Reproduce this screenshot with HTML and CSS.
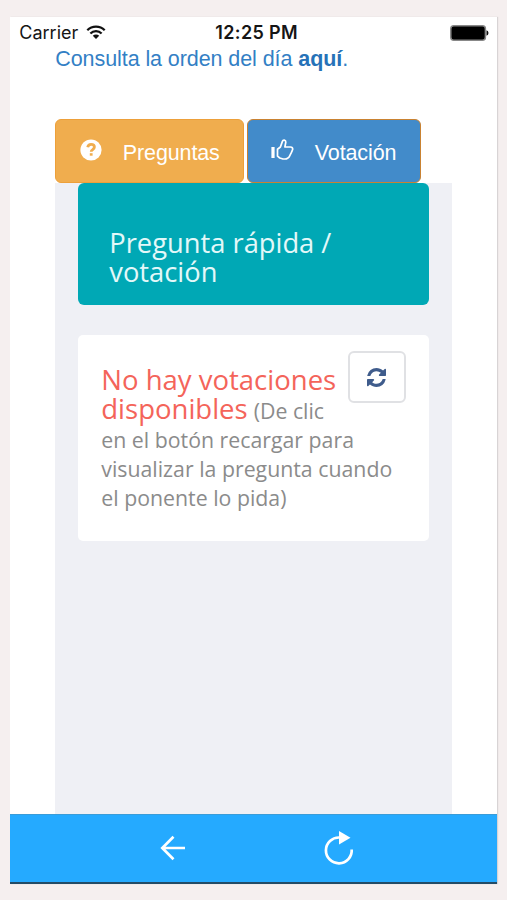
FILE: index.html
```html
<!DOCTYPE html>
<html lang="es">
<head>
<meta charset="utf-8">
<meta name="viewport" content="width=device-width">
<title>Votación</title>
<link rel="stylesheet" href="styles.css">
</head>
<body>
<div class="phone">
  <header class="status">
    <div class="carrier"><span>Carrier</span>
      <svg width="20" height="15" viewBox="0 0 20 15" fill="none" stroke="#111" stroke-width="2.3"><path d="M1.3 5.3a12.3 12.3 0 0 1 17.4 0M4.4 8.5a7.9 7.9 0 0 1 11.2 0"/><path d="M10 14 6.8 10.8a4.6 4.6 0 0 1 6.4 0z" fill="#111" stroke="none"/></svg>
    </div>
    <time class="clock">12:25 PM</time>
    <svg class="battery" width="39" height="16" viewBox="0 0 39 16"><rect x=".8" y=".8" width="34.6" height="14.4" rx="3" fill="#000" stroke="#888" stroke-width="1.5"/><path d="M36.5 5.3q2 .4 2 2.7t-2 2.7z" fill="#111"/></svg>
  </header>
  <main class="content">
    <a class="agenda" href="#">Consulta la orden del día <b>aquí</b>.</a>
    <nav class="tabs">
      <a class="tab tab-questions" href="#">
        <svg width="22" height="22" viewBox="0 0 22 22"><circle cx="11" cy="11" r="10.6" fill="#fff"/><path d="M7.7 8.2C8.2 5.8 9.5 5.3 11.1 5.3c2 0 3.3 1.1 3.3 2.8 0 2.6-3.2 2.3-3.2 4.7" fill="none" stroke="#f0ad4e" stroke-width="2.8"/><path d="M9.8 14.2h2.8v2.5H9.8z" fill="#f0ad4e"/></svg>
        <span>Preguntas</span>
      </a>
      <a class="tab tab-vote" href="#">
        <svg width="23" height="22" viewBox="0 0 23 22" fill="none" stroke="#fff" stroke-width="1.7" stroke-linejoin="round"><path d="M.4 8h3.2v11H.4z" fill="#fff" stroke="none"/><path d="M6.500 10.200 9.400 8l2-5.600q.5-1.400 1.900-1.200 1.600.3 1.500 2L13.900 8h5.600q2.300.1 2.200 2.200l-.7 2-.8 1.700-.9 1.800-1.100 2.100-1.700 1.500q-1 .7-2.500.7H12l-3.200-1-2.300-1.800z"/></svg>
        <span>Votación</span>
      </a>
    </nav>
    <section class="panel">
      <h1 class="title">Pregunta rápida /<br>votación</h1>
      <article class="card">
        <button class="reload" aria-label="Recargar">
          <svg width="19" height="19" viewBox="0 0 1536 1536" fill="#3f5c8c"><path d="M1511 928q0 5-1 7-64 268-268 434.500T764 1536q-146 0-282.500-55T238 1324l-129 129q-19 19-45 19t-45-19-19-45V960q0-26 19-45t45-19h448q26 0 45 19t19 45-19 45l-137 137q71 66 161 102t187 36q134 0 250-65t186-179q11-17 53-117 8-23 30-23h192q13 0 22.500 9.500t9.500 22.500zm25-800v448q0 26-19 45t-45 19h-448q-26 0-45-19t-19-45 19-45l138-138Q969 256 768 256q-134 0-250 65T332 500q-11 17-53 117-8 23-30 23H50q-13 0-22.500-9.500T18 608v-7q65-268 270-434.500T768 0q146 0 284 55.500T1297 212l130-129q19-19 45-19t45 19 19 45z"/></svg>
        </button>
        <div class="message">
          <div class="alert">No hay votaciones</div>
          <div class="mixed"><span class="alert">disponibles</span><span>(De clic</span></div>
          <div class="hint">en el botón recargar para<br>visualizar la pregunta cuando<br>el ponente lo pida)</div>
        </div>
      </article>
    </section>
  </main>
  <footer class="toolbar">
    <svg width="26" height="26" viewBox="0 0 26 26" fill="none" stroke="#fff" stroke-width="2.7"><path d="M25 13H2.500M13.500 1.800 2.300 13l11.200 11.200"/></svg>
    <svg width="30" height="34" viewBox="0 0 30 34" fill="none" stroke="#fff" stroke-width="2.700"><path d="M15.500 6.500A12.900 12.900 0 1 0 27.700 18.500"/><path d="M15 0v13.500L26.500 6.800z" fill="#fff" stroke="none"/></svg>
  </footer>
</div>
</body>
</html>
```
FILE: styles.css
```css
* { box-sizing: border-box; }
body {
  margin: 0;
  height: 900px;
  padding: 17px 10px 0 10.3px;
  background: #f5efef;
  font-family: "Liberation Sans", sans-serif;
  overflow: hidden;
}
a { text-decoration: none; }
svg { display: block; flex: none; }
.phone {
  display: flex;
  flex-direction: column;
  height: 866.5px;
  background: #fff;
  box-shadow: 1px 0 1px #d8d4d5;
}
.status {
  display: grid;
  grid-template-columns: 1fr auto 1fr;
  align-items: center;
  height: 31px;
  padding: 0 8px 0 9px;
  color: #151515;
  font-family: Inter, sans-serif;
  font-size: 18px;
}
.carrier { display: flex; align-items: center; gap: 8px; }
.clock { font-weight: 600; padding-left: 5px; letter-spacing: 0.35px; }
.battery { justify-self: end; }
.content {
  display: flex;
  flex-direction: column;
  flex: 1;
  width: 396.5px;
  margin-left: 45px;
}
.agenda {
  height: 71px;
  line-height: 22px;
  font-size: 21.5px;
  letter-spacing: -0.08px;
  color: #337fc5;
  white-space: nowrap;
}
.agenda b { color: #2672b8; }
.tabs { display: flex; gap: 3px; height: 64px; }
.tab {
  display: flex;
  align-items: center;
  border: 1.5px solid #eda03a;
  border-radius: 6px;
  color: #fff;
  font-size: 21.5px;
  letter-spacing: -0.12px;
  white-space: nowrap;
}
.tab svg { margin-top: -2px; }
.tab span { padding-top: 5px; }
.tab-questions { width: 189px; padding-left: 23.5px; gap: 21px; background: #f0ad4e; }
.tab-vote { width: 173.500px; padding-left: 22.5px; gap: 21px; background: #428bca; border-color: #c98232; }
.tab-vote svg { margin-top: -2px; }
.panel {
  flex: 1;
  padding: 0 23px;
  background: #eff0f5;
  font-family: "Open Sans", sans-serif;
}
.title {
  height: 122px;
  margin: 0 0 30px;
  padding: 45px 31px 0;
  border-radius: 6px;
  background: #00a8b5;
  color: #e3f8f9;
  font-size: 27.3px;
  font-weight: 400;
  line-height: 29px;
}
.card {
  height: 206px;
  padding: 16px 23px 0;
  border-radius: 5px;
  background: #fff;
}
.reload {
  float: right;
  display: grid;
  place-items: center;
  width: 58px;
  height: 52px;
  padding: 0;
  border: 2px solid #e0e1e4;
  border-radius: 6px;
  background: #fff;
}
.message {
  padding-top: 14px;
  color: #8b8b8b;
  font-size: 21.3px;
  line-height: 29px;
  white-space: nowrap;
}
.alert { color: #f4645a; font-size: 27.5px; }
.mixed { display: flex; align-items: baseline; gap: 6px; height: 29px; }
.hint { padding-top: 2px; }
.toolbar {
  display: flex;
  align-items: center;
  justify-content: space-between;
  height: 69.5px;
  padding: 0 143px 0 150px;
  border-top: 1px solid #3a9cd8;
  border-bottom: 2px solid #234b66;
  background: #25aaff;
}
```
